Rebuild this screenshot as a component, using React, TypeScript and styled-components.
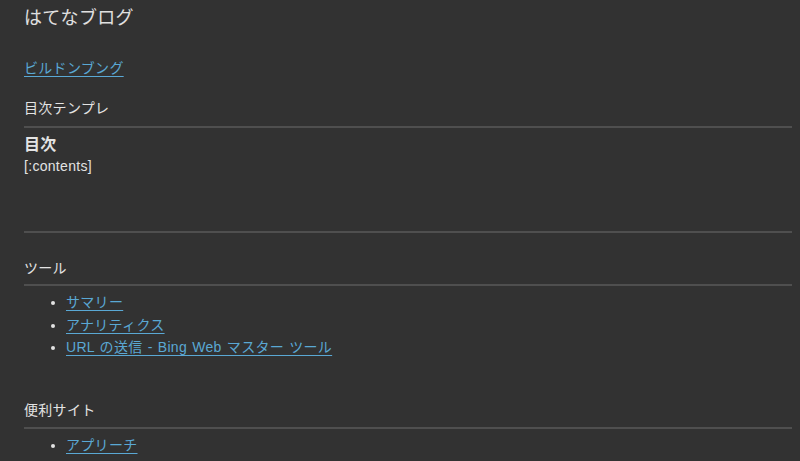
import React from "react";
import styled, { createGlobalStyle } from "styled-components";

const Global = createGlobalStyle`
  html, body {
    margin: 0;
    padding: 0;
    background: #323232;
  }
  body {
    font-family: "Liberation Sans", "Noto Sans CJK JP", sans-serif;
    color: #e3e3e3;
    letter-spacing: 0.3px;
    word-spacing: 1px;
  }
`;

const Page = styled.div`
  display: flex;
  flex-direction: column;
  padding: 0 8px 0 24px;
  min-height: 461px;
  box-sizing: border-box;
`;

const Title = styled.h1`
  margin: 6px 0 0;
  font-size: 18px;
  line-height: 24px;
  font-weight: 400;
  color: #e0e0e0;
`;

const Link = styled.a`
  color: #5aa8d4;
  text-decoration: underline;
  text-underline-offset: 3px;
  text-decoration-thickness: 1px;
  font-size: 14px;
`;

const LinkPara = styled.p`
  margin: 28px 0 0;
  line-height: 20px;
  font-size: 14px;
`;

const SectionHeader = styled.h2<{ $top: number; $pad: number }>`
  margin: ${(p) => p.$top}px 0 0;
  padding-bottom: ${(p) => p.$pad}px;
  font-size: 14px;
  line-height: 20px;
  font-weight: 400;
  color: #e3e3e3;
  border-bottom: 2px solid #4f4f4f;
`;

const TocTitle = styled.h3`
  margin: 7px 0 0;
  font-size: 16px;
  line-height: 20px;
  font-weight: 700;
`;

const Contents = styled.p`
  margin: 1px 0 0;
  font-size: 14px;
  line-height: 20px;
`;

const Divider = styled.hr`
  margin: 55px 0 0;
  border: none;
  height: 2px;
  background: #4f4f4f;
`;

const List = styled.ul`
  margin: 5px 0 0;
  padding-left: 42px;
  font-size: 14px;
  line-height: 22.5px;
  list-style: disc;
`;

const Item = styled.li`
  &::marker {
    color: #e3e3e3;
  }
`;

export default function App() {
  return (
    <>
      <Global />
      <Page>
        <Title>はてなブログ</Title>
        <LinkPara>
          <Link href="#">ビルドンブング</Link>
        </LinkPara>
        <SectionHeader $top={20} $pad={8}>目次テンプレ</SectionHeader>
        <TocTitle>目次</TocTitle>
        <Contents>[:contents]</Contents>
        <Divider />
        <SectionHeader $top={25} $pad={6}>ツール</SectionHeader>
        <List>
          <Item><Link href="#">サマリー</Link></Item>
          <Item><Link href="#">アナリティクス</Link></Item>
          <Item><Link href="#">URL の送信 - Bing Web マスター ツール</Link></Item>
        </List>
        <SectionHeader $top={41} $pad={7}>便利サイト</SectionHeader>
        <List>
          <Item><Link href="#">アプリーチ</Link></Item>
        </List>
      </Page>
    </>
  );
}
